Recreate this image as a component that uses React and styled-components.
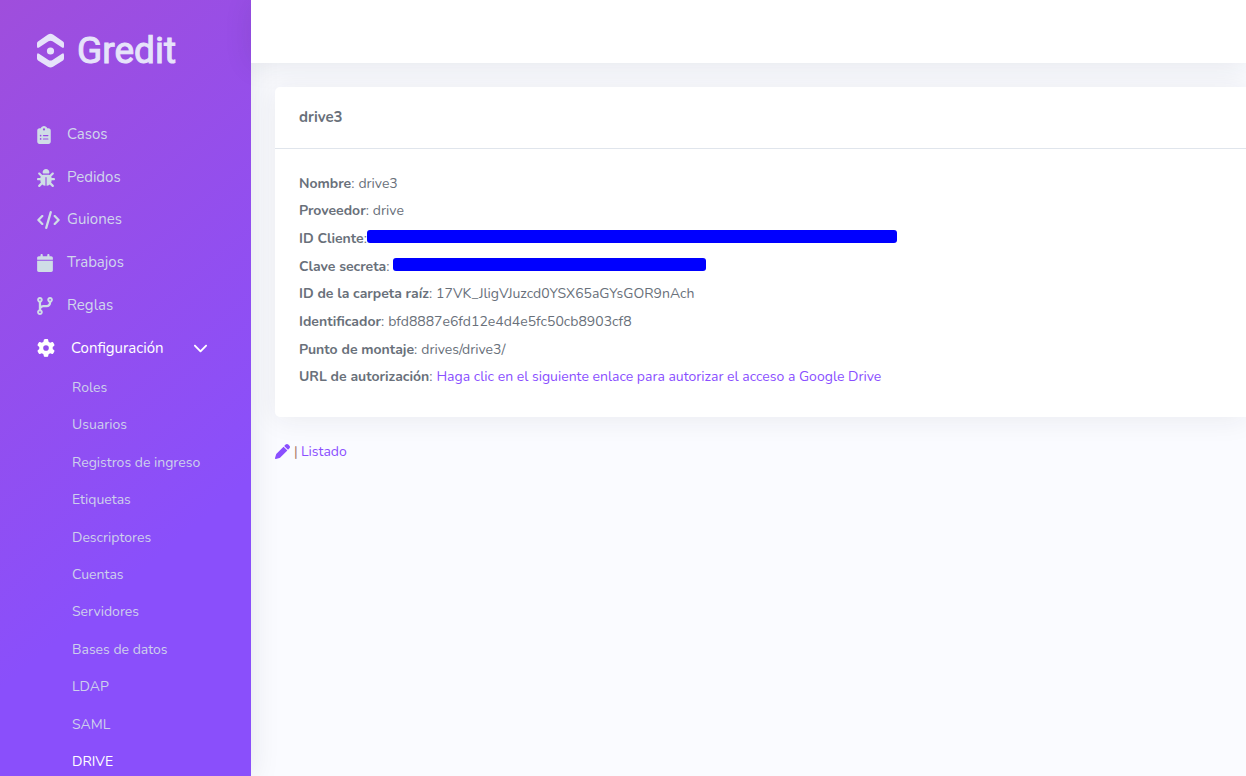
import React from "react";
import styled, { createGlobalStyle } from "styled-components";
import {
  FaBug, FaCalendar, FaChevronDown, FaClipboardList, FaCode, FaCodeBranch, FaGear, FaPen,
} from "react-icons/fa6";

const GlobalStyle = createGlobalStyle`
  *, *::before, *::after { box-sizing: border-box; }
  body {
    margin: 0;
    background: #fafbff;
    color: #69707a;
    font: 14px/20px Nunito, "Open Sans", "Noto Sans", sans-serif;
  }
  a { color: #8a4fff; text-decoration: none; }
`;

const Shell = styled.div`
  display: grid;
  grid-template-columns: 251px minmax(0, 1fr);
  height: 100vh;
  overflow: hidden;
`;

const Sidebar = styled.aside`
  overflow: hidden;
  background: linear-gradient(140deg, #9f4edc 0%, #8a4ffb 70%);
  box-shadow: 0 2px 28px rgba(33, 40, 50, 0.1);
`;

const Brand = styled.a`
  display: flex;
  align-items: center;
  gap: 12px;
  height: 101px;
  padding-left: 36px;
  && { color: #e6e3fa; }
  font: 37px/44px Roboto, "Liberation Sans", sans-serif;
  -webkit-text-stroke: 1px #e6e3fa;
`;

const MainMenu = styled.nav`
  display: grid;
  grid-auto-rows: 1fr;
  min-height: 213px;
  margin-top: 12px;
`;

const MenuLink = styled.a`
  display: flex;
  align-items: center;
  gap: 7px;
  padding-left: 37px;
  font-size: 15px;
  && { color: #d0d6ec; }
  svg { margin-top: 2px; color: #cfdde6; }
`;

const IconSlot = styled.span`
  display: flex;
  width: 23px;
  svg { flex: none; width: ${(p) => p.$width}px; }
`;

const MenuToggle = styled.button`
  display: flex;
  align-items: center;
  width: 100%;
  height: 43px;
  padding: 0 43px 0 37px;
  border: 0;
  background: none;
  color: #fff;
  font: inherit;
  font-size: 15px;
  text-align: left;
`;

const ToggleLabel = styled.span`
  flex: 1;
  padding-left: 11px;
`;

const SubMenu = styled.nav`
  display: grid;
  grid-auto-rows: 1fr;
  min-height: 412px;
`;

const SubLink = styled.a`
  display: flex;
  align-items: center;
  padding-left: 72px;
  && { color: ${(p) => (p.$active ? "#fff" : "#cdd0ec")}; }
`;

const Page = styled.div`
  min-width: 0;
`;

const TopBar = styled.header`
  position: relative;
  height: 63px;
  background: #fff;
  box-shadow: 0 2px 28px rgba(33, 40, 50, 0.1);
`;

const Content = styled.main`
  padding: 24px 0 24px 24px;
`;

const Card = styled.section`
  position: relative;
  border-radius: 5px 0 0 5px;
  background: #fff;
  box-shadow: 0 2px 28px rgba(33, 40, 50, 0.08);
`;

const CardTitle = styled.h1`
  margin: 0;
  padding: 20px 24px 21px;
  border-bottom: 1px solid #e0e5ec;
  font-size: 15px;
  line-height: 20px;
  font-weight: 700;
`;

const Details = styled.dl`
  display: grid;
  grid-auto-rows: 1fr;
  min-height: 268px;
  margin: 0;
  padding: 21px 24px 26px;
`;

const Detail = styled.div`
  display: flex;
  align-items: center;
  gap: ${(p) => (p.$tight ? "0" : "4px")};
  dt { flex: none; }
  dt b { font-weight: 700; }
  dd { margin: 0; }
`;

const Redacted = styled.span`
  display: block;
  width: ${(p) => p.$width}px;
  height: 13px;
  margin-bottom: 5px;
  border-radius: 3px;
  background: #00f;
`;

const Actions = styled.div`
  display: flex;
  align-items: center;
  gap: 4px;
  margin-top: 24px;
  line-height: 22px;
  a { display: flex; }
  svg { margin-bottom: 2px; }
`;

const Divider = styled.span`
  width: 3px;
  color: #a9796b;
`;

const menu = [
  ["Casos", FaClipboardList, 14],
  ["Pedidos", FaBug, 18],
  ["Guiones", FaCode, 23],
  ["Trabajos", FaCalendar, 16],
  ["Reglas", FaCodeBranch, 16],
];

const settings = [
  "Roles", "Usuarios", "Registros de ingreso", "Etiquetas", "Descriptores",
  "Cuentas", "Servidores", "Bases de datos", "LDAP", "SAML", "DRIVE",
];

const details = [
  { label: "Nombre", value: "drive3" },
  { label: "Proveedor", value: "drive" },
  { label: "ID Cliente", hidden: 530, tight: true },
  { label: "Clave secreta", hidden: 313 },
  { label: "ID de la carpeta raíz", value: "17VK_JligVJuzcd0YSX65aGYsGOR9nAch" },
  { label: "Identificador", value: "bfd8887e6fd12e4d4e5fc50cb8903cf8" },
  { label: "Punto de montaje", value: "drives/drive3/" },
  {
    label: "URL de autorización",
    value: <a href="#autorizar">Haga clic en el siguiente enlace para autorizar el acceso a Google Drive</a>,
  },
];

function Logo() {
  return (
    <svg width="29" height="36" viewBox="0 0 29 36" fill="currentColor" aria-hidden="true">
      <path d="M1 10.5Q1 9.3 2 8.6L12 1.5Q14.5 0 17 1.5L27 8.6Q28 9.3 28 10.5V13.5Q28 15.6 26 14.6L16.5 8.3Q14.5 7.1 12.5 8.3L3 14.6Q1 15.6 1 13.5Z" />
      <path d="M1 25.5Q1 26.7 2 27.4L12 33.8Q14.5 35.3 17 33.8L27 27.4Q28 26.7 28 25.5V22Q28 19.5 26 20.7L16.5 27Q14.5 28.2 12.5 27L3 20.7Q1 19.5 1 22Z" />
      <circle cx="14.5" cy="18" r="3.6" />
    </svg>
  );
}

export default function App() {
  return (
    <>
      <GlobalStyle />
      <Shell>
        <Sidebar>
          <Brand href="#inicio"><Logo />Gredit</Brand>
          <MainMenu aria-label="Principal">
            {menu.map(([label, Icon, width]) => (
              <MenuLink href="#" key={label}>
                <IconSlot $width={width}><Icon size={18} /></IconSlot>
                {label}
              </MenuLink>
            ))}
          </MainMenu>
          <MenuToggle type="button" aria-expanded="true">
            <IconSlot $width={18}><FaGear size={18} /></IconSlot>
            <ToggleLabel>Configuración</ToggleLabel>
            <FaChevronDown size={15} />
          </MenuToggle>
          <SubMenu aria-label="Configuración">
            {settings.map((label) => (
              <SubLink href="#" key={label} $active={label === "DRIVE"}>{label}</SubLink>
            ))}
          </SubMenu>
        </Sidebar>
        <Page>
          <TopBar />
          <Content>
            <Card>
              <CardTitle>drive3</CardTitle>
              <Details>
                {details.map((d) => (
                  <Detail key={d.label} $tight={d.tight}>
                    <dt><b>{d.label}</b>:</dt>
                    <dd>{d.hidden ? <Redacted $width={d.hidden} /> : d.value}</dd>
                  </Detail>
                ))}
              </Details>
            </Card>
            <Actions>
              <a href="#editar" aria-label="Editar"><FaPen size={15} /></a>
              <Divider>|</Divider>
              <a href="#listado">Listado</a>
            </Actions>
          </Content>
        </Page>
      </Shell>
    </>
  );
}
